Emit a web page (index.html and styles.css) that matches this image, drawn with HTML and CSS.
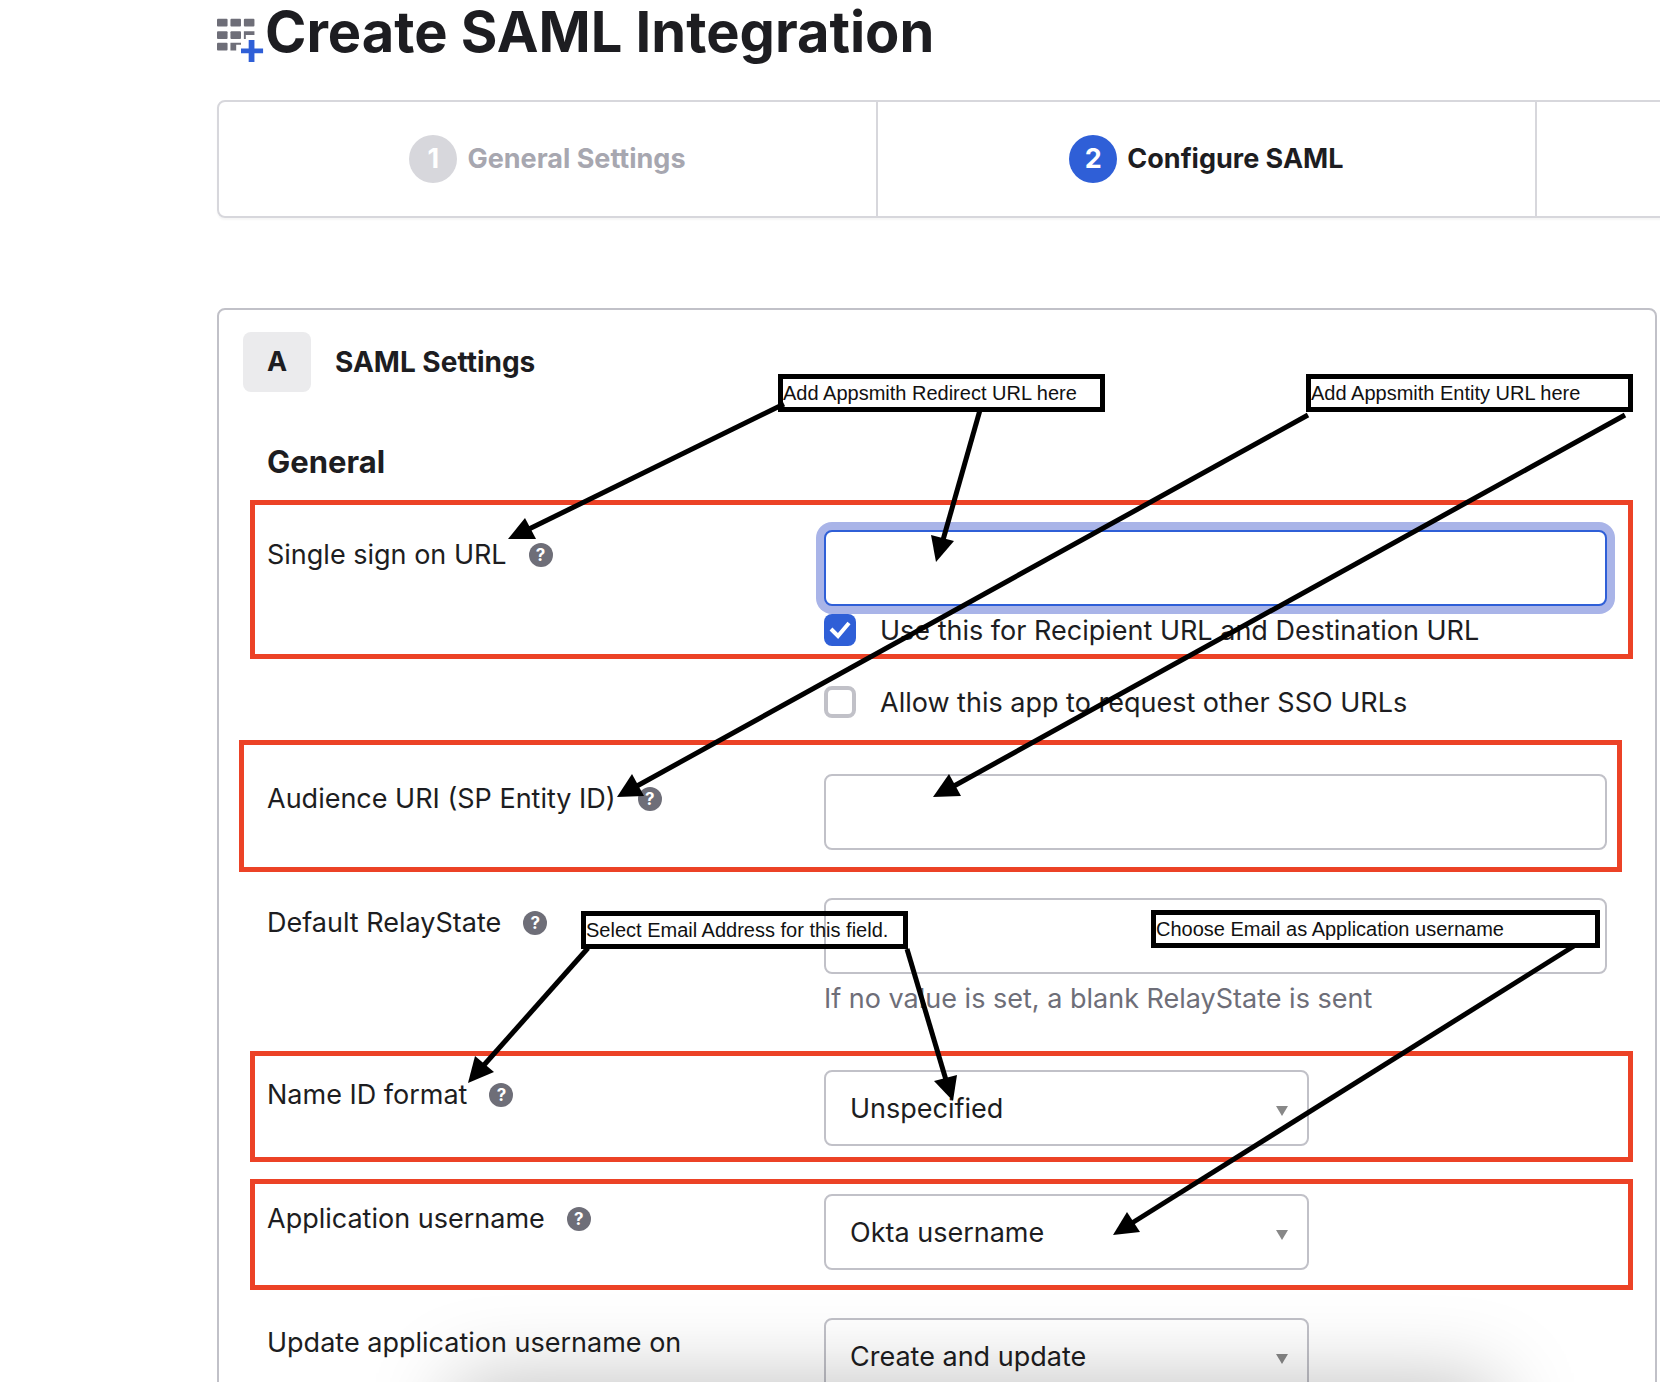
FILE: index.html
```html
<!DOCTYPE html>
<html lang="en">
<head>
<meta charset="utf-8">
<title>Create SAML Integration</title>
<link rel="stylesheet" href="styles.css">
</head>
<body>
<main class="page">
  <header class="page-head">
    <svg class="page-icon" viewBox="0 0 50 50" aria-hidden="true">
      <g fill="#6e6e78">
        <rect x="0" y="5" width="11" height="8" rx="1"/><rect x="14" y="5" width="11" height="8" rx="1"/><rect x="28" y="5" width="11" height="8" rx="1"/>
        <rect x="0" y="18" width="11" height="8" rx="1"/><rect x="14" y="18" width="11" height="8" rx="1"/><path d="M28 18h11v4h-9v4h-2z"/>
        <rect x="0" y="30" width="11" height="8" rx="1"/><path d="M14 30h11v2h-5v6h-6z"/>
      </g>
      <path d="M33 27h6v9h9v5h-9v9h-6v-9h-8v-5h8z" fill="#2f5fd7"/>
    </svg>
    <h1 class="page-title">Create SAML Integration</h1>
  </header>

  <ol class="wizard">
    <li class="step"><span class="step-number">1</span>General Settings</li>
    <li class="step step-current" aria-current="step"><span class="step-number">2</span>Configure SAML</li>
    <li class="step"></li>
  </ol>

  <form class="panel">
    <div class="panel-head">
      <span class="panel-letter">A</span>
      <h2 class="panel-title">SAML Settings</h2>
    </div>
    <fieldset class="fields">
      <legend class="fields-title">General</legend>

      <div class="row row-sso">
        <div class="label"><label for="sso">Single sign on URL</label><button type="button" class="help" aria-label="Help">?</button></div>
        <div class="control">
          <input class="text text-focused" id="sso" type="text">
          <label class="tick tick-first"><input type="checkbox" checked>Use this for Recipient URL and Destination URL</label>
          <label class="tick"><input type="checkbox">Allow this app to request other SSO URLs</label>
        </div>
      </div>
      <div class="row">
        <div class="label"><label for="audience">Audience URI (SP Entity ID)</label><button type="button" class="help" aria-label="Help">?</button></div>
        <div class="control"><input class="text" id="audience" type="text"></div>
      </div>
      <div class="row">
        <div class="label"><label for="relay">Default RelayState</label><button type="button" class="help" aria-label="Help">?</button></div>
        <div class="control">
          <input class="text" id="relay" type="text">
          <p class="hint">If no value is set, a blank RelayState is sent</p>
        </div>
      </div>
      <div class="row">
        <div class="label"><label for="nameid">Name ID format</label><button type="button" class="help" aria-label="Help">?</button></div>
        <div class="control"><div class="select"><select id="nameid"><option>Unspecified</option></select></div></div>
      </div>
      <div class="row">
        <div class="label"><label for="username">Application username</label><button type="button" class="help" aria-label="Help">?</button></div>
        <div class="control"><div class="select"><select id="username"><option>Okta username</option></select></div></div>
      </div>
      <div class="row">
        <div class="label"><label for="update">Update application username on</label></div>
        <div class="control"><div class="select"><select id="update"><option>Create and update</option></select></div></div>
      </div>
    </fieldset>
  </form>
</main>

<div class="dock-shadow"></div>

<div class="marks">
  <div class="frame frame-sso"></div>
  <div class="frame frame-audience"></div>
  <div class="frame frame-nameid"></div>
  <div class="frame frame-username"></div>
  <p class="note note-redirect">Add Appsmith Redirect URL here</p>
  <p class="note note-entity">Add Appsmith Entity URL here</p>
  <p class="note note-email">Select Email Address for this field.</p>
  <p class="note note-choose">Choose Email as Application username</p>
  <svg class="arrows" width="1660" height="1300" viewBox="0 0 1660 1300" aria-hidden="true">
    <g stroke="#000" stroke-width="5">
      <path d="M784 404L529 529"/>
      <path d="M980 410L943 540"/>
      <path d="M1308 415L637 786"/>
      <path d="M1625 415L954 786"/>
      <path d="M588 948L484 1065"/>
      <path d="M907 949L946 1080"/>
      <path d="M1574 946L1132 1223"/>
    </g>
    <g fill="#000">
      <path d="M508 539L525 518L536 539z"/>
      <path d="M936 562L931 535L954 541z"/>
      <path d="M617 797L632 774L644 796z"/>
      <path d="M933 797L949 774L961 796z"/>
      <path d="M468 1083L475 1056L494 1072z"/>
      <path d="M953 1101L934 1081L957 1075z"/>
      <path d="M1113 1235L1127 1212L1140 1232z"/>
    </g>
  </svg>
</div>
</body>
</html>
```
FILE: styles.css
```css
* { box-sizing: border-box; }

body {
  margin: 0;
  height: 100vh;
  overflow: hidden;
  position: relative;
  background: #fff;
  color: #1d1d21;
  font: 27px/34px Inter, "Liberation Sans", sans-serif;
}

h1, h2, p, ol { margin: 0; padding: 0; }

.page { height: 100%; overflow: hidden; padding: 0 3px 0 217px; }

.page-head { display: flex; align-items: flex-start; height: 100px; }
.page-icon { width: 48px; height: 50px; margin-top: 13px; flex: none; }
.page-title { font-size: 56px; line-height: 64px; font-weight: 700; white-space: nowrap; }

.wizard {
  display: flex;
  width: calc(137% + 6px);
  height: 118px;
  list-style: none;
  border: 2px solid #d7d7dc;
  border-radius: 8px;
  box-shadow: 0 2px 2px rgba(0, 0, 0, .04);
}
.step {
  flex: 1;
  display: flex;
  align-items: center;
  justify-content: center;
  gap: 10px;
  color: #a7a7b0;
  font-weight: 700;
}
.step + .step { border-left: 2px solid #d7d7dc; }
.step-current { color: #1d1d21; }
.step-number {
  width: 48px;
  height: 48px;
  border-radius: 50%;
  background: #d7d7dc;
  color: #fff;
  line-height: 48px;
  text-align: center;
}
.step-current .step-number { background: #2f5fd7; }

.panel {
  margin-top: 90px;
  min-height: 1200px;
  border: 2px solid #c1c1c8;
  border-radius: 8px;
}
.panel-head { display: flex; align-items: center; gap: 24px; padding: 22px 24px 0; }
.panel-letter {
  width: 68px;
  border-radius: 8px;
  background: #ebebed;
  line-height: 60px;
  text-align: center;
  font-weight: 700;
}
.panel-title { font-size: 28px; font-weight: 700; }

.fields { margin: 0; border: 0; padding: 50px 48px 0; min-width: 0; }
.fields-title { float: left; width: 100%; padding: 0; font-size: 31px; line-height: 40px; font-weight: 700; }

.row { clear: both; display: grid; grid-template-columns: 557px 1fr; padding-bottom: 48px; }
.row-sso { padding: 48px 0 56px; }
.label { display: flex; align-items: center; gap: 22px; height: 34px; margin-top: 8px; white-space: nowrap; }
.help {
  width: 24px;
  height: 24px;
  padding: 0;
  border: 0;
  border-radius: 50%;
  background: #6e6e78;
  color: #fff;
  font: 700 17px/24px Inter, sans-serif;
}

.text {
  display: block;
  width: 100%;
  height: 76px;
  padding: 0 24px;
  border: 2px solid #c1c1c8;
  border-radius: 8px;
  background: #fff;
  font: inherit;
}
.text-focused { border-color: #2f5fd7; box-shadow: 0 0 0 8px #a9b4e8; outline: 0; }

.tick { display: flex; align-items: flex-start; gap: 24px; height: 32px; margin-top: 40px; white-space: nowrap; }
.tick-first { margin-top: 8px; position: relative; }
.tick input {
  appearance: none;
  flex: none;
  width: 32px;
  height: 32px;
  margin: 0;
  border: 4px solid #c1c1c8;
  border-radius: 8px;
  background: #fff;
}
.tick input:checked {
  border: 0;
  background: #2f5fd7 url("data:image/svg+xml,%3Csvg xmlns='http://www.w3.org/2000/svg' viewBox='0 0 32 32'%3E%3Cpath d='M7 15l7 7L25 9' fill='none' stroke='white' stroke-width='4'/%3E%3C/svg%3E");
}

.hint { margin-top: 8px; padding-bottom: 6px; color: #6e6e78; white-space: nowrap; }

.select { position: relative; width: 62%; }
.select::after {
  content: "";
  position: absolute;
  right: 21px;
  top: 36px;
  border: 6px solid transparent;
  border-top: 10px solid #888;
  border-bottom: 0;
}
.select select {
  appearance: none;
  display: block;
  width: 100%;
  height: 76px;
  padding: 2px 24px 0;
  border: 2px solid #c1c1c8;
  border-radius: 8px;
  background: #fff;
  color: inherit;
  font: inherit;
}

/* Soft shadow of the window below the fold */
.dock-shadow {
  position: absolute;
  left: 455px;
  right: 165px;
  top: 100%;
  height: 100px;
  box-shadow: 0 0 84px rgba(0, 0, 0, .26);
  pointer-events: none;
}

/* Annotations drawn over the form */
.marks { position: absolute; left: 0; top: 0; pointer-events: none; }
.arrows { position: absolute; left: 0; top: 0; }
.frame { position: absolute; left: 250px; width: 1383px; border: 5px solid #ec4226; }
.frame-sso { top: 500px; height: 159px; }
.frame-audience { left: 239px; top: 740px; height: 132px; }
.frame-nameid { top: 1051px; height: 111px; }
.frame-username { top: 1179px; height: 111px; }
.note {
  position: absolute;
  width: 327px;
  height: 38px;
  border: 5px solid #000;
  color: #111;
  font: 20px/28px "Liberation Sans", Arial, sans-serif;
  white-space: nowrap;
}
.note-redirect { left: 778px; top: 374px; }
.note-entity { left: 1306px; top: 374px; }
.note-email { left: 581px; top: 911px; }
.note-choose { left: 1151px; top: 910px; width: 449px; }
```
